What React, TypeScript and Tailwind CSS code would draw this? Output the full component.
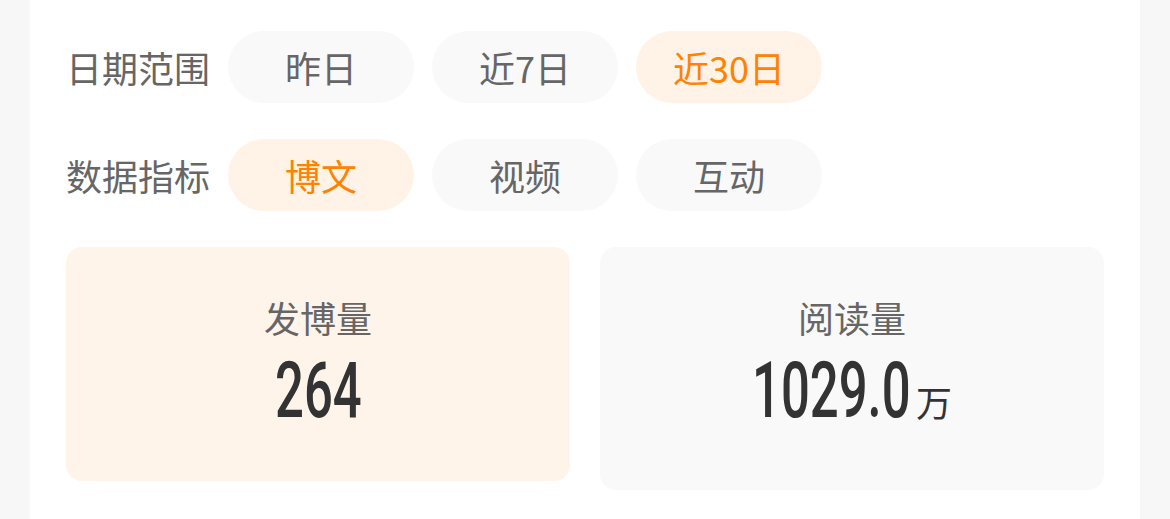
const cjk = "font-['Noto_Sans_CJK_SC','Noto_Sans',sans-serif]";

function Chip({ text, active }: { text: string; active?: boolean }) {
  return (
    <div
      className={`flex h-[72px] w-[186px] items-center justify-center rounded-full text-[36px] leading-none ${
        active ? "bg-[#fff3e7] text-[#ff8200]" : "bg-[#f9f9f9] text-[#666666]"
      }`}
    >
      {text}
    </div>
  );
}

function FilterRow({ label, items, active }: { label: string; items: string[]; active: number }) {
  return (
    <div className="flex items-center gap-[18px]">
      <div className="w-[144px] text-[36px] leading-none text-[#666666]">{label}</div>
      {items.map((it, i) => (
        <Chip key={it} text={it} active={i === active} />
      ))}
    </div>
  );
}

function StatCard({
  label,
  value,
  unit,
  highlight,
  height,
  numWidth,
}: {
  label: string;
  value: string;
  unit?: string;
  highlight?: boolean;
  height: string;
  numWidth: string;
}) {
  return (
    <div
      className={`flex flex-col items-center rounded-[16px] pt-[52px] ${height} ${
        highlight ? "bg-[#fef4ea]" : "bg-[#f9f9f9]"
      }`}
    >
      <div className="text-[36px] leading-none text-[#666666]">{label}</div>
      <div className="mt-[18px] flex items-baseline">
        {/* condensed digits: scale the glyphs, keep the box at the measured width */}
        <span className={`inline-block whitespace-nowrap ${numWidth}`}>
          <span className="inline-block origin-left [transform:scaleX(0.66)] font-['Roboto',sans-serif] text-[77px] font-medium leading-none text-[#333333]">
            {value}
          </span>
        </span>
        {unit && <span className="ml-[3px] text-[36px] leading-none text-[#333333]">{unit}</span>}
      </div>
    </div>
  );
}

export default function App() {
  return (
    <div className={`h-[519px] w-full bg-[#f7f7f7] px-[30px] ${cjk}`}>
      <div className="h-full bg-white px-[36px] pt-[31px]">
        <div className="flex flex-col gap-[36px]">
          <FilterRow label="日期范围" items={["昨日", "近7日", "近30日"]} active={2} />
          <FilterRow label="数据指标" items={["博文", "视频", "互动"]} active={0} />
        </div>
        <div className="mt-[36px] grid grid-cols-2 items-start gap-[30px]">
          <StatCard label="发博量" value="264" highlight height="h-[234px]" numWidth="w-[86px]" />
          <StatCard label="阅读量" value="1029.0" unit="万" height="h-[243px]" numWidth="w-[161px]" />
        </div>
      </div>
    </div>
  );
}
